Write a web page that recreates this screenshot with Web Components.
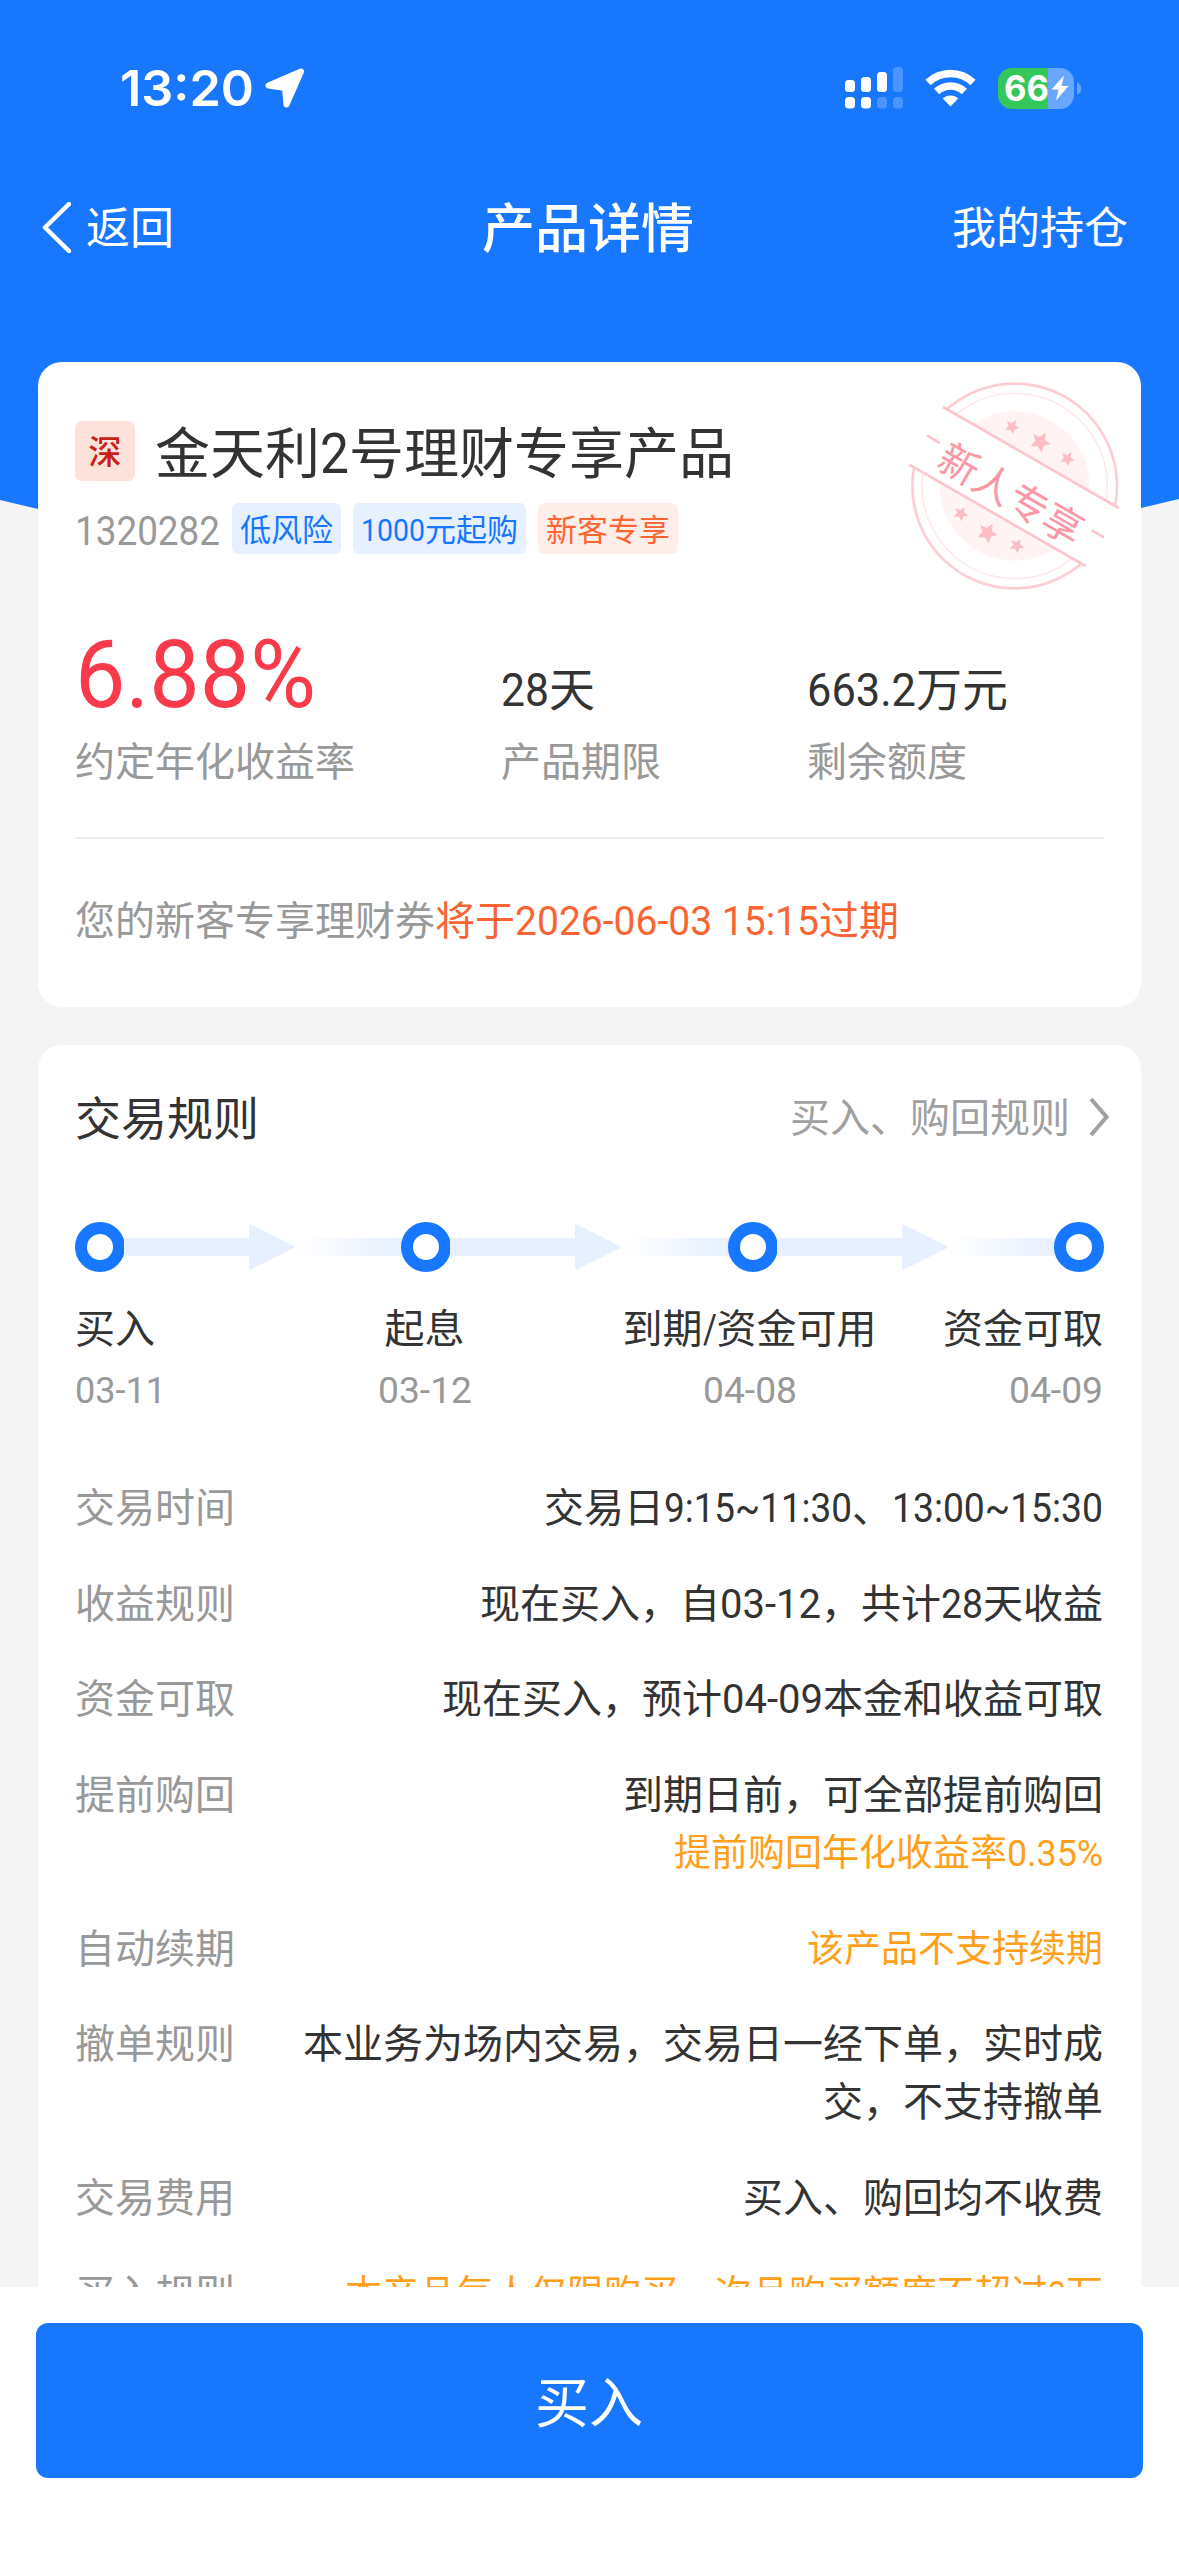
<!DOCTYPE html>
<html lang="zh-CN">
<head>
<meta charset="utf-8">
<title>产品详情</title>
<style>
html,body{margin:0;padding:0}
body{width:1179px;height:2556px;overflow:hidden;background:#f4f4f4;color:#333;font-family:"Noto Sans CJK SC",sans-serif;font-size:40px;line-height:58px}
</style>
</head>
<body>
<app-screen>
  <status-bar slot="top"></status-bar>
  <nav-bar slot="top">产品详情</nav-bar>
  <product-card></product-card>
  <rules-card>
    <rule-row label="交易时间">交易日<din-num w="188">9:15~11:30</din-num>、<din-num w="211">13:00~15:30</din-num></rule-row>
    <rule-row label="收益规则">现在买入，自<din-num w="101">03-12</din-num>，共计<din-num w="42">28</din-num>天收益</rule-row>
    <rule-row label="资金可取">现在买入，预计<din-num w="101">04-09</din-num>本金和收益可取</rule-row>
    <rule-row label="提前购回">到期日前，可全部提前购回<warn-text>提前购回年化收益率<din-num w="96">0.35%</din-num></warn-text></rule-row>
    <rule-row label="自动续期"><warn-text>该产品不支持续期</warn-text></rule-row>
    <rule-row label="撤单规则">本业务为场内交易，交易日一经下单，实时成交，不支持撤单</rule-row>
    <rule-row label="交易费用">买入、购回均不收费</rule-row>
    <rule-row label="买入规则"><warn-text>本产品每人仅限购买一次且购买额度不超过<din-num w="18">2</din-num>万</warn-text></rule-row>
  </rules-card>
  <buy-bar slot="bottom">买入</buy-bar>
</app-screen>

<script>
const component = (name, html, setup) => customElements.define(name, class extends HTMLElement {
  connectedCallback() {
    if (this.shadowRoot) return;
    this.attachShadow({ mode: 'open' }).innerHTML = html.trim();
    if (setup) setup(this, this.shadowRoot);
  }
});

component('app-screen', `
<style>
:host{display:flex;flex-direction:column;width:1179px;height:2556px;position:relative;overflow:hidden;background:#f4f4f4}
.backdrop{position:absolute;inset:0 0 auto 0;height:560px;background:#1777ff;clip-path:polygon(0 0,1179px 0,1179px 499px,1141px 508px,590px 555px,38px 509px,0 500px)}
header{position:relative;height:362px;flex:none}
main{position:relative;flex:1;min-height:0;overflow:hidden;display:flex;flex-direction:column;gap:38px;padding:0 38px}
footer{position:relative;flex:none}
</style>
<div class="backdrop"></div>
<header><slot name="top"></slot></header>
<main><slot></slot></main>
<footer><slot name="bottom"></slot></footer>`);

component('status-bar', `
<style>
:host{display:flex;justify-content:space-between;align-items:center;height:176px;box-sizing:border-box;padding:0 98px 0 120px;color:#fff;font-family:Inter,sans-serif}
.left,.right{display:flex;align-items:center}
.time{font-size:50px;font-weight:600}
.left svg{margin-left:11px}
.wifi{margin:0 22px}
.battery{display:flex;align-items:center;gap:3px}
.cell{width:76px;height:41px;border-radius:14px;background:linear-gradient(90deg,#34c759 50px,#69a6ff 50px);display:flex;align-items:center;box-sizing:border-box;padding-left:6px}
.cell b{font-size:35px;line-height:41px;font-weight:700}
.cell svg{margin-left:2px;flex:none}
</style>
<div class="left"><span class="time"><din-num w="134" face="Inter">13:20</din-num></span><svg width="40" height="40" viewBox="0 0 40 40"><path d="M36 3.5 3.5 17.5 20 20 21.5 36.5Z" fill="#fff" stroke="#fff" stroke-width="6" stroke-linejoin="round"/></svg></div>
<div class="right">
<svg width="58" height="42" viewBox="0 0 58 42" fill="#fff"><rect y="13" width="10" height="12" rx="3.5"/><rect x="16" y="10" width="10" height="15" rx="3.5"/><rect x="32" y="5" width="10" height="20" rx="3.5"/><rect x="48" width="10" height="25" rx="3.5" opacity=".22"/><rect y="30" width="10" height="11.500" rx="3.5"/><rect x="16" y="30" width="10" height="11.500" rx="3.5"/><rect x="32" y="30" width="10" height="11.500" rx="3.5" opacity=".22"/><rect x="48" y="30" width="10" height="11.500" rx="3.5" opacity=".22"/></svg>
<svg class="wifi" width="51" height="38" viewBox="0 0 51 38"><g fill="none" stroke="#fff" stroke-width="7.600"><path d="M3 13.600A32.500 32.500 0 0 1 48 13.600"/><path d="M11.600 22.500A20.200 20.200 0 0 1 39.400 22.500"/></g><path d="M17.700 29.600A11.300 11.300 0 0 1 33.300 29.600L25.500 37.500Z" fill="#fff"/></svg>
<div class="battery"><div class="cell"><b><din-num w="45" face="Inter">66</din-num></b><svg width="18" height="26" viewBox="0 0 18 26"><path d="M13 .5.5 14.500H7.500L5 25.500 17.500 11H10.500Z" fill="#fff"/></svg></div>
<svg width="4" height="13" viewBox="0 0 4 13"><path d="M0 0Q4 2 4 6.500T0 13Z" fill="#69a6ff"/></svg></div>
</div>`);

component('nav-bar', `
<style>
:host{display:grid;grid-template-columns:1fr auto 1fr;align-items:center;height:98px;padding:0 51px 0 42px;color:#fff;font-size:44px}
.back{display:flex;align-items:center;gap:15px}
.title{font-size:53px;font-weight:500;padding-left:6px}
.more{justify-self:end}
svg{margin-top:4px}
</style>
<div class="back"><svg width="29" height="51" viewBox="0 0 29 51"><path d="M27 2 3 25.500 27 49" fill="none" stroke="#fff" stroke-width="4.500" stroke-linecap="round" stroke-linejoin="round"/></svg><span>返回</span></div>
<div class="title"><slot></slot></div>
<div class="more">我的持仓</div>`);

component('tag-chip', `
<style>
:host{display:block;height:51px;line-height:49px;font-size:31px;padding:0 8px;border-radius:6px;white-space:nowrap;color:#1777ff;background:#e6f0ff}
:host([tone=hot]){color:#ff6433;background:#feeeea}
</style><slot></slot>`);

component('metric-item', `
<style>
:host{display:flex;flex-direction:column;justify-content:flex-end}
.value{height:82px;line-height:100px;font-size:46px}
:host([big]) .value{height:100px;font-size:95px;color:#f93a4a;line-height:85px}
.label{margin-top:12px;color:#999}
</style><div class="value"><slot></slot></div><div class="label"></div>`,
(el, root) => root.querySelector('.label').textContent = el.getAttribute('label'));

component('stamp-mark', `
<style>:host{display:block}svg{display:block}text{font-family:"Noto Sans CJK SC",sans-serif;font-size:120px}</style>
<svg width="223" height="217" viewBox="130 110 669 651">
<defs>
<path id="star" d="M0-27 8-9 27-7 13 6 17 25 0 15-17 25-13 6-27-7-8-9Z"/>
<clipPath id="upper"><path d="M250 200 775 502 900 502V90H250Z"/></clipPath>
<clipPath id="lower"><path d="M150 375 677 676 677 800H100V346Z"/></clipPath>
</defs>
<g clip-path="url(#upper)"><circle cx="465" cy="437" r="224" fill="#fff3f4"/><circle cx="465" cy="437" r="278" fill="none" stroke="#ffe6e9" stroke-width="4"/><circle cx="465" cy="437" r="307" fill="none" stroke="#fecdd3" stroke-width="8"/></g>
<g clip-path="url(#lower)"><circle cx="465" cy="437" r="224" fill="#fff3f4"/><circle cx="465" cy="437" r="278" fill="none" stroke="#ffe6e9" stroke-width="4"/><circle cx="465" cy="437" r="307" fill="none" stroke="#fecdd3" stroke-width="8"/></g>
<path d="M250 200 777 503M149 373 678 677M202 285 240 308M696 570 733 591" stroke="#fdc5cc" stroke-width="8" fill="none"/>
<g fill="#fdbdc5"><use href="#star" transform="translate(458 258) rotate(30) scale(.8)"/><use href="#star" transform="translate(543 303) rotate(30) scale(1.12)"/><use href="#star" transform="translate(624 354) rotate(30) scale(.8)"/><use href="#star" transform="translate(304 519) rotate(30) scale(.8)"/><use href="#star" transform="translate(384 576) rotate(30) scale(1.12)"/><use href="#star" transform="translate(472 615) rotate(30) scale(.8)"/></g>
<text x="0" y="0" text-anchor="middle" fill="#fb97a4" transform="translate(454 461) rotate(30) translate(0 44)">新人专享</text>
</svg>`);

component('product-card', `
<style>
:host{display:block;flex:none;position:relative;height:645px;box-sizing:border-box;padding:59px 37px 0 37px;background:#fff;border-radius:24px}
stamp-mark{position:absolute;right:15px;top:15px}
.name{display:flex;align-items:center;height:60px;font-size:55px;gap:20px}
.badge{width:60px;height:60px;border-radius:7px;background:#fde2dc;color:#c9211a;font-size:33px;font-weight:500;text-align:center;line-height:58px}
.tags{display:flex;align-items:center;gap:12px;margin-top:22px;height:51px}
.code{color:#999;margin-bottom:2px}
.metrics{display:grid;grid-template-columns:426px 306px 1fr;margin-top:64px}
hr{height:2px;border:0;margin:49px 0 50px;background:#ececec}
.notice{color:#999}
em{font-style:normal;color:#fa6432}
</style>
<stamp-mark></stamp-mark>
<div class="name"><span class="badge">深</span><span>金天利<din-num w="29">2</din-num>号理财专享产品</span></div>
<div class="tags"><span class="code"><din-num w="145">1320282</din-num></span><tag-chip>低风险</tag-chip><tag-chip><din-num w="64">1000</din-num>元起购</tag-chip><tag-chip tone="hot">新客专享</tag-chip></div>
<div class="metrics">
<metric-item big label="约定年化收益率"><din-num w="241">6.88%</din-num></metric-item>
<metric-item label="产品期限"><din-num w="48">28</din-num>天</metric-item>
<metric-item label="剩余额度"><din-num w="109">663.2</din-num>万元</metric-item>
</div>
<hr>
<div class="notice">您的新客专享理财券<em>将于<din-num w="304">2026-06-03 15:15</din-num>过期</em></div>`);

component('flow-node', `<style>:host{display:block;flex:none;box-sizing:border-box;width:50px;height:50px;border:12.5px solid #1777ff;border-radius:50%;background:#fff}</style>`);

component('flow-arrow', `
<style>
:host{display:flex;align-items:center;flex:1;height:50px}
.bar{height:18px;width:125px;background:#e6f0ff;margin-left:-1px}
svg{display:block;flex:none}
.fade{height:18px;flex:1;margin-right:-1px;background:linear-gradient(90deg,#fff,#e6f0ff)}
</style>
<div class="bar"></div><svg width="47" height="48" viewBox="0 0 48 48"><path d="M0 3Q0 0 3 1.500L45 22.500Q48 24 45 25.500L3 46.500Q0 48 0 45Z" fill="#e6f0ff"/></svg><div class="fade"></div>`);

component('rules-card', `
<style>
:host{display:block;flex:none;height:1300px;box-sizing:border-box;padding:41px 37px 0 37px;background:#fff;border-radius:24px}
.head{display:flex;justify-content:space-between;align-items:center;height:58px;font-size:46px}
.link{display:flex;align-items:center;gap:19px;font-size:40px;color:#a0a0a0;margin-right:-5px}
.link svg{margin-top:4px}
.flow{display:flex;align-items:center;margin-top:78px}
.steps{display:grid;grid-template-columns:186px 327px 323px 192px;margin-top:25px;text-align:center}
.steps>:first-child{text-align:left}.steps>:last-child{text-align:right}
.date{margin-top:7px;line-height:50px;font-size:37px;color:#999}
.rows{display:flex;flex-direction:column;gap:37.7px;margin-top:64px}
</style>
<div class="head"><span>交易规则</span><span class="link"><span>买入、购回规则</span><svg width="20" height="38" viewBox="0 0 20 38"><path d="M2 1 17.500 19 2 37" fill="none" stroke="#a0a0a0" stroke-width="4"/></svg></span></div>
<div class="flow"><flow-node></flow-node><flow-arrow></flow-arrow><flow-node></flow-node><flow-arrow></flow-arrow><flow-node></flow-node><flow-arrow></flow-arrow><flow-node></flow-node></div>
<div class="steps">
<div>买入<div class="date"><din-num w="91">03-11</din-num></div></div>
<div>起息<div class="date"><din-num w="94">03-12</din-num></div></div>
<div>到期<din-num w="14">/</din-num>资金可用<div class="date"><din-num w="94">04-08</din-num></div></div>
<div>资金可取<div class="date"><din-num w="94">04-09</din-num></div></div>
</div>
<div class="rows"><slot></slot></div>`);

component('rule-row', `
<style>
:host{display:flex;justify-content:space-between;align-items:flex-start}
.label{color:#999;flex:none}
.value{width:805px;text-align:right;padding-right:1px}
</style><div class="label"></div><div class="value"><slot></slot></div>`,
(el, root) => root.querySelector('.label').textContent = el.getAttribute('label'));

component('warn-text', `<style>:host{display:block;color:#ff9f1a;font-size:37px;white-space:nowrap}</style><slot></slot>`);

component('buy-bar', `
<style>
:host{display:block;height:269px;box-sizing:border-box;padding:36px 36px 0;background:#fff}
button{display:block;width:100%;height:155px;border:0;border-radius:12px;background:#1777ff;color:#fff;font:inherit;font-size:54px;line-height:154px;padding:0 1px 1px 0}
</style><button><slot></slot></button>`);

// Condensed figures: the digits are fitted to the advance width given in "w".
component('din-num', `<style>:host{display:inline-block;white-space:pre;text-align:left;line-height:1}span{display:inline-block;transform-origin:0 50%}</style><span><slot></slot></span>`,
(el, root) => {
  const span = root.querySelector('span');
  span.style.fontFamily = (el.getAttribute('face') || 'Roboto') + ',sans-serif';
  const w = Number(el.getAttribute('w'));
  const natural = span.getBoundingClientRect().width;
  el.style.width = w + 'px';
  if (natural) span.style.transform = 'scaleX(' + w / natural + ')';
});
</script>
</body>
</html>
